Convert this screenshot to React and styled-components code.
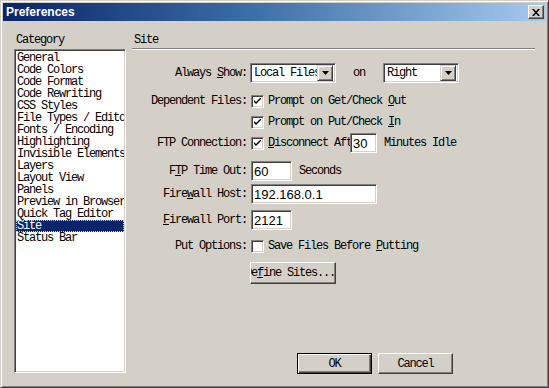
import React from "react";
import styled, { createGlobalStyle } from "styled-components";

const GlobalStyle = createGlobalStyle`
    html, body {
        margin: 0;
        padding: 0;
        background: #d4d0c8;
    }
    body {
        font-family: "Liberation Mono", "DejaVu Sans Mono", monospace;
        font-size: 12px;
        letter-spacing: -1.2px;
        color: #000;
    }
`;

const Window = styled.div`
    width: 549px;
    height: 388px;
    box-sizing: border-box;
    background: #d4d0c8;
    border: 1px solid;
    border-color: #d4d0c8 #404040 #404040 #d4d0c8;
    box-shadow: inset 1px 1px #fff, inset -1px -1px #808080;
    padding: 2px;
    display: flex;
    flex-direction: column;
`;

const TitleBar = styled.div`
    height: 18px;
    flex-shrink: 0;
    display: flex;
    align-items: center;
    justify-content: space-between;
    padding: 0 2px;
    background: linear-gradient(to right, #0a246a 0%, #3a6ea5 45%, #a6caf0 100%);
`;

const Title = styled.span`
    font-family: "Liberation Sans", Arial, sans-serif;
    font-weight: bold;
    font-size: 12px;
    letter-spacing: 0;
    color: #fff;
    padding-left: 1px;
`;

const CloseButton = styled.div`
    width: 16px;
    height: 14px;
    box-sizing: border-box;
    background: #d4d0c8;
    border: 1px solid;
    border-color: #fff #404040 #404040 #fff;
    box-shadow: inset -1px -1px #808080;
    display: flex;
    align-items: center;
    justify-content: center;
`;

const Body = styled.div`
    flex: 1;
    display: flex;
    min-height: 0;
`;

const Sidebar = styled.div`
    display: flex;
    flex-direction: column;
    padding-left: 11px;
`;

const SectionLabel = styled.div`
    height: 12px;
    line-height: 12px;
    margin-top: ${(p) => p.$top}px;
    padding-left: ${(p) => p.$indent || 0}px;
    white-space: nowrap;
`;

const Sunken = styled.div`
    box-sizing: border-box;
    background: #fff;
    border: 1px solid;
    border-color: #808080 #fff #fff #808080;
    box-shadow: inset 1px 1px #404040, inset -1px -1px #d4d0c8;
`;

const ListBox = styled(Sunken)`
    width: 112px;
    height: 324px;
    margin-top: 3px;
    padding: 2px 1px 1px 1px;
    overflow: hidden;
`;

const ListItem = styled.div`
    height: 12px;
    line-height: 12px;
    padding-left: 1px;
    white-space: nowrap;
    overflow: hidden;
    box-sizing: border-box;
    background: ${(p) => (p.$selected ? "#0a246a" : "transparent")};
    color: ${(p) => (p.$selected ? "#fff" : "#000")};
    outline: ${(p) => (p.$selected ? "1px dotted #d4d0c8" : "none")};
    outline-offset: -1px;
`;

const Main = styled.div`
    flex: 1;
    display: flex;
    flex-direction: column;
    margin-left: 6px;
    padding-right: 11px;
    padding-bottom: 11px;
`;

const Divider = styled.div`
    margin-top: 2px;
    border-top: 1px solid #808080;
    border-bottom: 1px solid #fff;
`;

const Row = styled.div`
    display: grid;
    grid-template-columns: 115px auto;
    column-gap: 4px;
    align-items: center;
    height: ${(p) => p.$h || 20}px;
    margin-top: ${(p) => p.$top}px;
`;

const Label = styled.div`
    text-align: right;
    white-space: nowrap;
`;

const Controls = styled.div`
    display: flex;
    align-items: center;
    white-space: pre;
`;

const U = styled.span`
    text-decoration: underline;
`;

const Combo = styled(Sunken)`
    width: ${(p) => p.$w}px;
    height: 20px;
    display: flex;
    align-items: center;
    padding: 2px;
    margin-left: ${(p) => p.$ml || 0}px;
`;

const ComboText = styled.div`
    flex: 1;
    overflow: hidden;
    white-space: nowrap;
    padding-left: 1px;
`;

const ComboButton = styled.div`
    width: 16px;
    height: 16px;
    box-sizing: border-box;
    background: #d4d0c8;
    border: 1px solid;
    border-color: #d4d0c8 #404040 #404040 #d4d0c8;
    box-shadow: inset 1px 1px #fff, inset -1px -1px #808080;
    display: flex;
    align-items: center;
    justify-content: center;
    flex-shrink: 0;
`;

const Text = styled.span`
    white-space: pre;
    margin: 0 ${(p) => p.$mr || 0}px 0 ${(p) => p.$ml || 0}px;
`;

const Box = styled(Sunken)`
    width: 13px;
    height: 13px;
    display: flex;
    align-items: center;
    justify-content: center;
    flex-shrink: 0;
    margin-right: 4px;
`;

const TextField = styled(Sunken)`
    width: ${(p) => p.$w}px;
    height: 20px;
    display: flex;
    align-items: center;
    padding-left: 2px;
    font-family: "Liberation Sans", Arial, sans-serif;
    font-size: 13px;
    letter-spacing: 0;
    flex-shrink: 0;
`;

const Button = styled.div`
    width: ${(p) => p.$w}px;
    height: ${(p) => p.$h}px;
    box-sizing: border-box;
    background: #d4d0c8;
    border: 1px solid;
    border-color: ${(p) => (p.$default ? "#000" : "#fff #404040 #404040 #fff")};
    box-shadow: ${(p) =>
        p.$default
            ? "inset 1px 1px #fff, inset -1px -1px #404040, inset -2px -2px #808080"
            : "inset -1px -1px #808080"};
    display: flex;
    align-items: center;
    justify-content: center;
    overflow: hidden;
    white-space: pre;
    margin-left: ${(p) => p.$ml || 0}px;
    flex-shrink: 0;
`;

const Footer = styled.div`
    margin-top: auto;
    display: flex;
    padding-left: 165px;
`;

const Arrow = () => (
    <svg width="7" height="4" viewBox="0 0 7 4">
        <path d="M0 0h7L3.5 4z" fill="#000" />
    </svg>
);

const Check = () => (
    <svg width="7" height="7" viewBox="0 0 7 7">
        <path d="M0 2v2l2 2 5-5V-1L2 4z" fill="#000" />
    </svg>
);

const Checkbox = ({ checked }) => <Box>{checked && <Check />}</Box>;

const categories = [
    "General",
    "Code Colors",
    "Code Format",
    "Code Rewriting",
    "CSS Styles",
    "File Types / Editors",
    "Fonts / Encoding",
    "Highlighting",
    "Invisible Elements",
    "Layers",
    "Layout View",
    "Panels",
    "Preview in Browser",
    "Quick Tag Editor",
    "Site",
    "Status Bar",
];

const App = () => {
    return (
        <>
            <GlobalStyle />
            <Window>
                <TitleBar>
                    <Title>Preferences</Title>
                    <CloseButton>
                        <svg width="8" height="7" viewBox="0 0 8 7">
                            <path d="M0 0h2l2 2.5L6 0h2L5 3.5 8 7H6L4 4.5 2 7H0l3-3.5z" fill="#000" />
                        </svg>
                    </CloseButton>
                </TitleBar>
                <Body>
                    <Sidebar>
                        <SectionLabel $top={13} $indent={2}>Category</SectionLabel>
                        <ListBox>
                            {categories.map((c) => (
                                <ListItem key={c} $selected={c === "Site"}>
                                    {c}
                                </ListItem>
                            ))}
                        </ListBox>
                    </Sidebar>
                    <Main>
                        <SectionLabel $top={13} $indent={2}>Site</SectionLabel>
                        <Divider />

                        <Row $top={13}>
                            <Label>
                                Always <U>S</U>how:
                            </Label>
                            <Controls>
                                <Combo $w={86} $ml={-1}>
                                    <ComboText>Local Files</ComboText>
                                    <ComboButton>
                                        <Arrow />
                                    </ComboButton>
                                </Combo>
                                <Text $ml={17} $mr={18}>on</Text>
                                <Combo $w={76}>
                                    <ComboText>Right</ComboText>
                                    <ComboButton>
                                        <Arrow />
                                    </ComboButton>
                                </Combo>
                            </Controls>
                        </Row>

                        <Row $top={8}>
                            <Label>Dependent Files:</Label>
                            <Controls>
                                <Checkbox checked />
                                <Text>
                                    Prompt on Get/Check <U>O</U>ut
                                </Text>
                            </Controls>
                        </Row>

                        <Row $top={1}>
                            <Label />
                            <Controls>
                                <Checkbox checked />
                                <Text>
                                    Prompt on Put/Check <U>I</U>n
                                </Text>
                            </Controls>
                        </Row>

                        <Row $top={1}>
                            <Label>FTP Connection:</Label>
                            <Controls>
                                <Checkbox checked />
                                <Text $mr={-2}>
                                    <U>D</U>isconnect Aft
                                </Text>
                                <TextField $w={27}>30</TextField>
                                <Text $ml={7}>Minutes Idle</Text>
                            </Controls>
                        </Row>

                        <Row $top={8}>
                            <Label>
                                F<U>T</U>P Time Out:
                            </Label>
                            <Controls>
                                <TextField $w={41}>60</TextField>
                                <Text $ml={7}>Seconds</Text>
                            </Controls>
                        </Row>

                        <Row $top={3}>
                            <Label>
                                Fire<U>w</U>all Host:
                            </Label>
                            <Controls>
                                <TextField $w={126}>192.168.0.1</TextField>
                            </Controls>
                        </Row>

                        <Row $top={6}>
                            <Label>
                                <U>F</U>irewall Port:
                            </Label>
                            <Controls>
                                <TextField $w={41}>2121</TextField>
                            </Controls>
                        </Row>

                        <Row $top={6}>
                            <Label>Put Options:</Label>
                            <Controls>
                                <Checkbox />
                                <Text>
                                    Save Files Before <U>P</U>utting
                                </Text>
                            </Controls>
                        </Row>

                        <Row $top={6} $h={22}>
                            <Label />
                            <Controls>
                                <Button $w={86} $h={22} $ml={-1}>
                                    <Text $ml={-6}>
                                        De<U>f</U>ine Sites...
                                    </Text>
                                </Button>
                            </Controls>
                        </Row>

                        <Footer>
                            <Button $w={75} $h={21} $default>
                                OK
                            </Button>
                            <Button $w={75} $h={21} $ml={6}>
                                Cancel
                            </Button>
                        </Footer>
                    </Main>
                </Body>
            </Window>
        </>
    );
};

export default App;
